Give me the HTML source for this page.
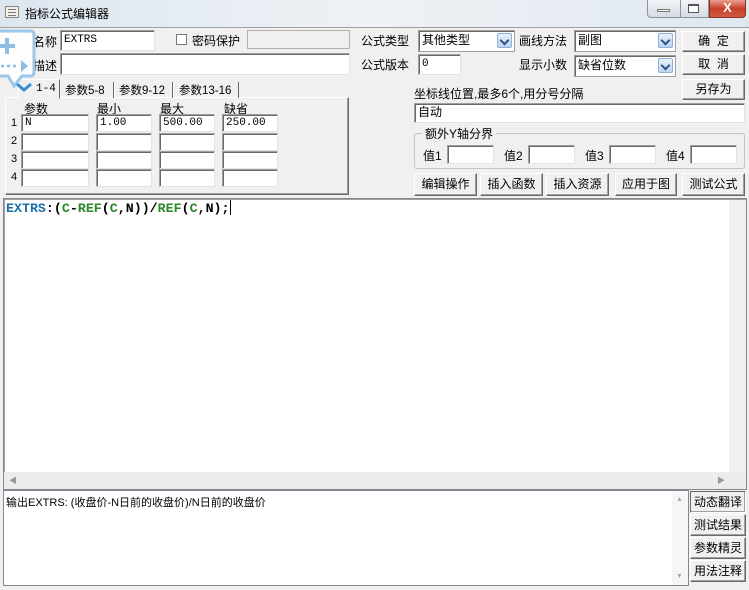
<!DOCTYPE html>
<html><head><meta charset="utf-8"><style>
*{box-sizing:border-box;margin:0;padding:0}
body{width:749px;height:590px;background:#f0f0f0;font-family:"Liberation Sans","Noto Sans CJK SC",sans-serif;font-size:12px;color:#000;position:relative;overflow:hidden}
.a{position:absolute;white-space:nowrap}
.in{position:absolute;background:#fff;border:1px solid #a0a0a0;border-right-color:#e3e3e3;border-bottom-color:#e3e3e3;box-shadow:inset 1px 1px 0 #696969;font-family:"Liberation Mono","Noto Sans CJK SC",monospace;font-size:11px;padding:3px 3px;line-height:13px}
.btn{position:absolute;background:#f0f0f0;border:1px solid;border-color:#fff #696969 #696969 #fff;text-align:center;font-size:12px;box-shadow:inset -1px -1px 0 #a0a0a0}
.sel{position:absolute;background:#fff;border:1px solid #a0a0a0;box-shadow:inset 1px 1px 0 #696969;padding:2px 3px;font-size:12px;line-height:15px}
.sel i{position:absolute;right:2px;top:2px;width:15px;height:15px;background:linear-gradient(#e8f1fb,#bcd5ef);border:1px solid #8fb0d8;border-radius:2px}
.sel i:after{content:"";position:absolute;left:3px;top:3px;width:5px;height:5px;border-right:2px solid #34508a;border-bottom:2px solid #34508a;transform:rotate(45deg)}
</style></head><body>
<div class="a" style="left:0;top:0;width:749px;height:27px;background:linear-gradient(90deg,#dde6ef,#eef2f6 50%,#dfe7ef)"></div>
<div class="a" style="left:5px;top:6px;width:14px;height:12px;border:1px solid #888;background:#f4f0e6"></div>
<div class="a" style="left:8px;top:9px;width:8px;height:1px;background:#777;box-shadow:0 3px 0 #777,0 6px 0 #777"></div>
<div class="a" style="left:25px;top:5px;font-size:12px">指标公式编辑器</div>
<div class="a" style="left:647px;top:0;width:34px;height:18px;border:1px solid #8a94a0;border-top:none;border-radius:0 0 0 4px;background:linear-gradient(#f2f4f7,#d5dbe3)"></div>
<div class="a" style="left:657px;top:9px;width:13px;height:3px;border:1px solid #777;background:#fff"></div>
<div class="a" style="left:680px;top:0;width:29px;height:18px;border:1px solid #8a94a0;border-top:none;background:linear-gradient(#f2f4f7,#d5dbe3)"></div>
<div class="a" style="left:688px;top:4px;width:11px;height:9px;border:1px solid #555;border-top-width:2px;background:#fff"></div>
<div class="a" style="left:709px;top:0;width:37px;height:18px;border:1px solid #8a3020;border-top:none;border-radius:0 0 4px 0;background:linear-gradient(#e8a090,#c8402a 50%,#d05a40);color:#fff;font-weight:bold;text-align:center;font-size:13px;line-height:16px">X</div>
<div class="a" style="left:0;top:27px;width:749px;height:1px;background:#a0a0a0"></div>

<div class="a" style="left:33px;top:33px">名称</div>
<div class="in" style="left:60px;top:30px;width:95px;height:21px">EXTRS</div>
<div class="a" style="left:176px;top:34px;width:11px;height:11px;border:1px solid #777;background:#fff"></div>
<div class="a" style="left:192px;top:32px">密码保护</div>
<div class="a" style="left:247px;top:30px;width:103px;height:19px;border:1px solid #b0b0b0;background:#f0f0f0"></div>
<div class="a" style="left:33px;top:57px">描述</div>
<div class="in" style="left:60px;top:53px;width:290px;height:22px"></div>

<!-- tabs -->
<div class="a" style="left:5px;top:97px;width:344px;height:98px;border:1px solid;border-color:#fff #696969 #696969 #fff;box-shadow:inset -1px -1px 0 #a0a0a0"></div>
<div class="a" style="left:18px;top:79px;width:42px;height:20px;background:#f0f0f0;border:1px solid;border-color:#fff #696969 transparent #fff;padding:3px 0 0 17px;font-family:'Liberation Mono',monospace;font-size:11px">1-4</div>
<div class="a" style="left:61px;top:82px;width:53px;height:16px;border-right:1px solid #696969;padding-left:4px;font-size:11.5px">参数5-8</div>
<div class="a" style="left:114px;top:82px;width:59px;height:16px;border-right:1px solid #696969;border-left:1px solid #fff;padding-left:4px;font-size:11.5px">参数9-12</div>
<div class="a" style="left:173px;top:82px;width:66px;height:16px;border-right:1px solid #696969;border-left:1px solid #fff;padding-left:5px;font-size:11.5px">参数13-16</div>
<div class="a" style="left:24px;top:100px">参数</div>
<div class="a" style="left:97px;top:100px">最小</div>
<div class="a" style="left:160px;top:100px">最大</div>
<div class="a" style="left:224px;top:100px">缺省</div>
<div class="a" style="left:11px;top:117px;font-size:11px">1</div>
<div class="a" style="left:11px;top:135px;font-size:11px">2</div>
<div class="a" style="left:11px;top:153px;font-size:11px">3</div>
<div class="a" style="left:11px;top:171px;font-size:11px">4</div>
<div class="in" style="left:21px;top:114px;width:68px;height:18px;padding-top:2px">N</div>
<div class="in" style="left:96px;top:114px;width:56px;height:18px;padding-top:2px">1.00</div>
<div class="in" style="left:159px;top:114px;width:56px;height:18px;padding-top:2px">500.00</div>
<div class="in" style="left:222px;top:114px;width:56px;height:18px;padding-top:2px">250.00</div>
<div class="in" style="left:21px;top:133px;width:68px;height:18px"></div>
<div class="in" style="left:96px;top:133px;width:56px;height:18px"></div>
<div class="in" style="left:159px;top:133px;width:56px;height:18px"></div>
<div class="in" style="left:222px;top:133px;width:56px;height:18px"></div>
<div class="in" style="left:21px;top:151px;width:68px;height:18px"></div>
<div class="in" style="left:96px;top:151px;width:56px;height:18px"></div>
<div class="in" style="left:159px;top:151px;width:56px;height:18px"></div>
<div class="in" style="left:222px;top:151px;width:56px;height:18px"></div>
<div class="in" style="left:21px;top:169px;width:68px;height:18px"></div>
<div class="in" style="left:96px;top:169px;width:56px;height:18px"></div>
<div class="in" style="left:159px;top:169px;width:56px;height:18px"></div>
<div class="in" style="left:222px;top:169px;width:56px;height:18px"></div>

<!-- floating icon -->
<svg class="a" style="left:0;top:28px" width="37" height="70" viewBox="0 0 37 70">
<path d="M-2 3 H30 Q34 3 34 7 V44 Q34 48 30 48 H22 L14 58 L8 48 H-2 Z" fill="#fff" fill-opacity="0.85" stroke="#9cc6ea" stroke-width="3"/>
<path d="M7 10 V26 M-1 18 H15" stroke="#8ebde6" stroke-width="4"/>
<path d="M1 38 h3 M7 38 h3 M13 38 h3" stroke="#8ebde6" stroke-width="2.5"/>
<path d="M21 32 L28 38 L21 44 Z" fill="#8ebde6"/>
<path d="M17 56 L24 62 L31 56" fill="none" stroke="#3d8fd6" stroke-width="3"/>
</svg>

<!-- right area -->
<div class="a" style="left:361px;top:32px">公式类型</div>
<div class="sel" style="left:418px;top:30px;width:97px;height:22px">其他类型<i></i></div>
<div class="a" style="left:519px;top:32px">画线方法</div>
<div class="sel" style="left:574px;top:30px;width:102px;height:22px">副图<i></i></div>
<div class="btn" style="left:682px;top:31px;width:63px;height:21px;line-height:18px">确&nbsp;&nbsp;定</div>
<div class="a" style="left:361px;top:56px">公式版本</div>
<div class="in" style="left:418px;top:54px;width:43px;height:21px">0</div>
<div class="a" style="left:519px;top:56px">显示小数</div>
<div class="sel" style="left:574px;top:55px;width:102px;height:22px">缺省位数<i></i></div>
<div class="btn" style="left:682px;top:54px;width:63px;height:21px;line-height:18px">取&nbsp;&nbsp;消</div>
<div class="btn" style="left:682px;top:79px;width:63px;height:21px;line-height:18px">另存为</div>
<div class="a" style="left:414px;top:85px">坐标线位置,最多6个,用分号分隔</div>
<div class="in" style="left:414px;top:103px;width:331px;height:20px;font-family:'Liberation Sans','Noto Sans CJK SC',sans-serif;font-size:12px;padding:2px 3px">自动</div>
<div class="a" style="left:414px;top:133px;width:331px;height:36px;border:1px solid #c5c5c5;border-radius:3px"></div>
<div class="a" style="left:422px;top:125px;background:#f0f0f0;padding:0 3px">额外Y轴分界</div>
<div class="a" style="left:423px;top:147px">值1</div>
<div class="in" style="left:447px;top:145px;width:47px;height:19px"></div>
<div class="a" style="left:504px;top:147px">值2</div>
<div class="in" style="left:528px;top:145px;width:47px;height:19px"></div>
<div class="a" style="left:585px;top:147px">值3</div>
<div class="in" style="left:609px;top:145px;width:47px;height:19px"></div>
<div class="a" style="left:666px;top:147px">值4</div>
<div class="in" style="left:690px;top:145px;width:47px;height:19px"></div>
<div class="btn" style="left:414px;top:173px;width:63px;height:23px;line-height:20px">编辑操作</div>
<div class="btn" style="left:480px;top:173px;width:63px;height:23px;line-height:20px">插入函数</div>
<div class="btn" style="left:546px;top:173px;width:63px;height:23px;line-height:20px">插入资源</div>
<div class="btn" style="left:615px;top:173px;width:62px;height:23px;line-height:20px">应用于图</div>
<div class="btn" style="left:682px;top:173px;width:63px;height:23px;line-height:20px">测试公式</div>

<!-- editor -->
<div class="a" style="left:3px;top:198px;width:744px;height:292px;background:#fff;border:1px solid #828790;box-shadow:inset 1px 1px 0 #a0a0a0"></div>
<div class="a" style="left:6px;top:200px;font-family:'Liberation Mono',monospace;font-weight:bold;font-size:13.3px;line-height:18px"><span style="color:#1a6fa8">EXTRS</span>:(<span style="color:#2a8a2a">C</span>-<span style="color:#2a8a2a">REF</span>(<span style="color:#2a8a2a">C</span>,N))/<span style="color:#2a8a2a">REF</span>(<span style="color:#2a8a2a">C</span>,N);<span style="display:inline-block;width:1px;height:15px;background:#000;vertical-align:-3px"></span></div>
<div class="a" style="left:729px;top:200px;width:17px;height:272px;background:#f0f0f0"></div>
<div class="a" style="left:737px;top:477px;font-size:7px;color:#999">▼</div>
<div class="a" style="left:4px;top:472px;width:742px;height:17px;background:#ececec"></div>
<div class="a" style="left:9px;top:475px;font-size:8px;color:#999">◀</div>
<div class="a" style="left:717px;top:475px;font-size:8px;color:#999">▶</div>

<!-- output -->
<div class="a" style="left:3px;top:490px;width:686px;height:96px;background:#fff;border:1px solid #828790"></div>
<div class="a" style="left:6px;top:494px;font-size:11px">输出EXTRS: (收盘价-N日前的收盘价)/N日前的收盘价</div>
<div class="a" style="left:672px;top:491px;width:16px;height:94px;background:#f6f6f6"></div>
<div class="a" style="left:676px;top:496px;font-size:7px;color:#aaa">▲</div>
<div class="a" style="left:676px;top:573px;font-size:7px;color:#aaa">▼</div>
<div class="btn" style="left:690px;top:491px;width:56px;height:22px;line-height:20px;border-color:#696969 #fff #fff #696969">动态翻译</div>
<div class="btn" style="left:690px;top:514px;width:56px;height:22px;line-height:20px">测试结果</div>
<div class="btn" style="left:690px;top:537px;width:56px;height:22px;line-height:20px">参数精灵</div>
<div class="btn" style="left:690px;top:560px;width:56px;height:22px;line-height:20px">用法注释</div>
</body></html>
